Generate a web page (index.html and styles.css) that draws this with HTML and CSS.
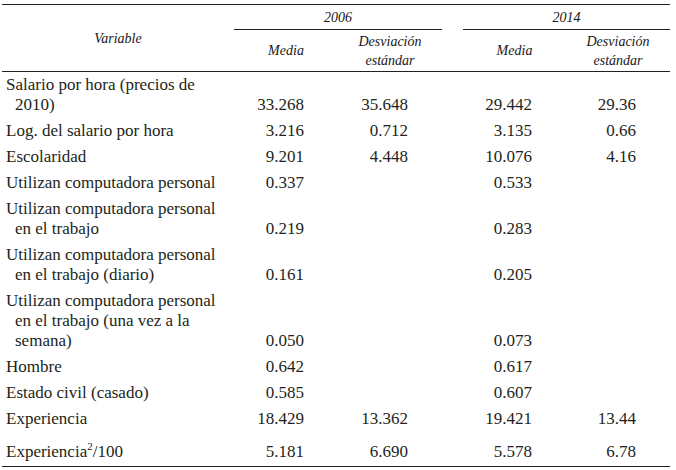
FILE: index.html
```html
<!DOCTYPE html>
<html lang="es">
<head>
<meta charset="utf-8">
<title>Estadísticas descriptivas</title>
<link rel="stylesheet" href="styles.css">
</head>
<body>
<table class="stats">
  <colgroup>
    <col class="c-var">
    <col class="c-num">
    <col class="c-num">
    <col class="c-gap">
    <col class="c-num2">
    <col class="c-num">
  </colgroup>
  <thead>
    <tr class="h-year">
      <th class="h-var" rowspan="2">Variable</th>
      <th class="year" colspan="2">2006</th>
      <th class="gap"></th>
      <th class="year" colspan="2">2014</th>
    </tr>
    <tr class="h-sub">
      <th>Media</th>
      <th>Desviación<br>estándar</th>
      <th class="gap"></th>
      <th>Media</th>
      <th>Desviación<br>estándar</th>
    </tr>
  </thead>
  <tbody>
    <tr><td class="var"><div class="lbl">Salario por hora (precios de 2010)</div></td><td class="num">33.268</td><td class="num">35.648</td><td></td><td class="num">29.442</td><td class="num">29.36</td></tr>
    <tr><td class="var"><div class="lbl">Log. del salario por hora</div></td><td class="num">3.216</td><td class="num">0.712</td><td></td><td class="num">3.135</td><td class="num">0.66</td></tr>
    <tr><td class="var"><div class="lbl">Escolaridad</div></td><td class="num">9.201</td><td class="num">4.448</td><td></td><td class="num">10.076</td><td class="num">4.16</td></tr>
    <tr><td class="var"><div class="lbl">Utilizan computadora personal</div></td><td class="num">0.337</td><td class="num"></td><td></td><td class="num">0.533</td><td class="num"></td></tr>
    <tr><td class="var"><div class="lbl">Utilizan computadora personal en el trabajo</div></td><td class="num">0.219</td><td class="num"></td><td></td><td class="num">0.283</td><td class="num"></td></tr>
    <tr><td class="var"><div class="lbl">Utilizan computadora personal en el trabajo (diario)</div></td><td class="num">0.161</td><td class="num"></td><td></td><td class="num">0.205</td><td class="num"></td></tr>
    <tr><td class="var"><div class="lbl">Utilizan computadora personal en el trabajo (una vez a la semana)</div></td><td class="num">0.050</td><td class="num"></td><td></td><td class="num">0.073</td><td class="num"></td></tr>
    <tr><td class="var"><div class="lbl">Hombre</div></td><td class="num">0.642</td><td class="num"></td><td></td><td class="num">0.617</td><td class="num"></td></tr>
    <tr><td class="var"><div class="lbl">Estado civil (casado)</div></td><td class="num">0.585</td><td class="num"></td><td></td><td class="num">0.607</td><td class="num"></td></tr>
    <tr><td class="var"><div class="lbl">Experiencia</div></td><td class="num">18.429</td><td class="num">13.362</td><td></td><td class="num">19.421</td><td class="num">13.44</td></tr>
    <tr class="last"><td class="var"><div class="lbl">Experiencia<sup>2</sup>/100</div></td><td class="num">5.181</td><td class="num">6.690</td><td></td><td class="num">5.578</td><td class="num">6.78</td></tr>
  </tbody>
</table>
</body>
</html>
```
FILE: styles.css
```css
html, body {
  margin: 0;
  padding: 0;
  background: #ffffff;
}

body {
  padding: 4px 0 0 2px;
  color: #231f20;
  font-family: "Liberation Serif", "Times New Roman", serif;
}

.stats {
  table-layout: fixed;
  width: 668px;
  border-collapse: separate;
  border-spacing: 0;
  border-top: 1px solid #231f20;
  border-bottom: 1px solid #231f20;
}

.c-var { width: 232px; }
.c-num { width: 104px; }
.c-num2 { width: 103px; }
.c-gap { width: 21px; }

.stats th {
  font-style: italic;
  font-weight: normal;
  font-size: 14px;
  line-height: 19px;
  text-align: center;
  vertical-align: middle;
  padding: 0;
  color: #1a1718;
}

.h-year th {
  height: 24px;
}

.h-year th.year {
  border-bottom: 1px solid #231f20;
}

.h-sub th {
  height: 41px;
  border-bottom: 1px solid #231f20;
}

.stats th.h-var {
  border-bottom: 1px solid #231f20;
}

.stats td {
  font-size: 17px;
  line-height: 20px;
  padding: 3px 0;
  vertical-align: bottom;
}

.stats td.var {
  padding-left: 4px;
  padding-right: 6px;
}

.lbl {
  padding-left: 9px;
  text-indent: -9px;
}

.stats td.num {
  text-align: right;
  padding-right: 34px;
}

.stats tr.last td {
  padding-top: 10px;
  padding-bottom: 4px;
}

.stats sup {
  font-size: 11px;
  line-height: 0;
  vertical-align: 7px;
}
```
